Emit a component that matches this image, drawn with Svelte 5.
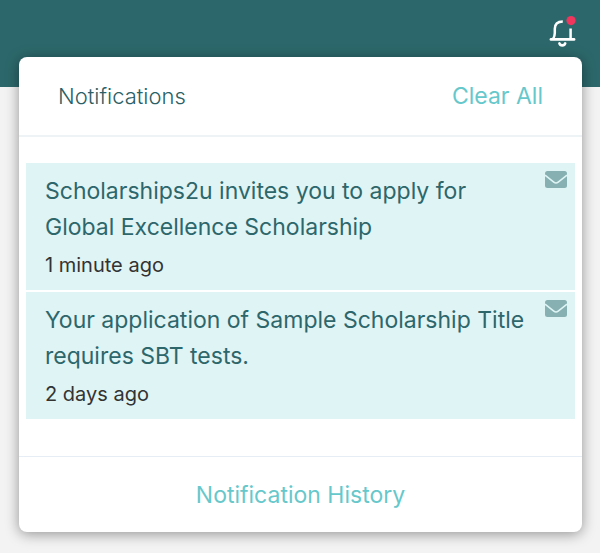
<script>
  let notifications = $state([
    {
      id: 1,
      text: 'Scholarships2u invites you to apply for Global Excellence Scholarship',
      time: '1 minute ago'
    },
    {
      id: 2,
      text: 'Your application of Sample Scholarship Title requires SBT tests.',
      time: '2 days ago'
    }
  ]);

  function clearAll() {
    notifications = [];
  }

  function markRead(id) {
    notifications = notifications.filter(n => n.id !== id);
  }
</script>

<header class="topbar">
  <button class="bell" aria-label="Notifications">
    <svg width="28" height="34" viewBox="0 0 28 34" fill="none">
      <path d="M14.8 7.4C9.6 7.4 6.8 10 6.8 14.8V19c0 2.4-.6 4.2-1.8 6.2M22.6 14.6V25" stroke="#fff" stroke-width="2.5" />
      <path d="M3 25.4h23" stroke="#fff" stroke-width="2.8" stroke-linecap="round" />
      <path d="M11.4 29.4c.8 2.6 5 2.6 5.8 0" stroke="#fff" stroke-width="2.6" stroke-linecap="round" />
      {#if notifications.length}
        <circle cx="23" cy="6.6" r="4.6" fill="#f0365c" />
      {/if}
    </svg>
  </button>
</header>

<section class="panel">
  <div class="panel-head">
    <h1>Notifications</h1>
    <button class="action" onclick={clearAll}>Clear All</button>
  </div>

  <ul class="list">
    {#each notifications as item (item.id)}
      <li class="item">
        <div class="body">
          <p class="text">{item.text}</p>
          <p class="time">{item.time}</p>
        </div>
        <button class="mail" aria-label="Mark as read" onclick={() => markRead(item.id)}>
          <svg width="24" height="18" viewBox="0 0 24 18">
            <rect x="1" width="22" height="17" rx="2.5" fill="#86b0b2" />
            <path d="M1 4.2l8.8 7c1.3 1 3.1 1 4.4 0L23 4.2" fill="none" stroke="#dff4f5" stroke-width="1.6" />
          </svg>
        </button>
      </li>
    {/each}
  </ul>

  <div class="panel-foot">
    <a class="action" href="#history">Notification History</a>
  </div>
</section>

<style>
:global(body) {
    margin: 0;
    background-color: #f3f3f3;
    font-family: Inter, "Liberation Sans", sans-serif;
}
button {
    padding: 0;
    border: none;
    background: none;
    font-family: inherit;
    cursor: pointer;
}
svg {
    display: block;
}
.topbar {
    display: flex;
    justify-content: flex-end;
    align-items: flex-start;
    box-sizing: border-box;
    height: 87px;
    padding: 14px 24px 0;
    background-color: #2c686b;
}
.panel {
    position: relative;
    margin: -30px 18px 20px 19px;
    background-color: #fff;
    border-radius: 8px;
    box-shadow: 0 2px 14px rgba(0, 0, 0, 0.4);
}
.panel-head {
    display: flex;
    justify-content: space-between;
    align-items: center;
    height: 78px;
    padding: 0 39px;
    border-bottom: 2px solid #eef3f5;
}
h1 {
    margin: 0;
    font-size: 22px;
    font-weight: 300;
    color: #2c5f66;
}
.action {
    font-size: 23px;
    color: #66c8cb;
    text-decoration: none;
}
.list {
    display: flex;
    flex-direction: column;
    gap: 2px;
    min-height: 256px;
    margin: 0;
    padding: 26px 7px 37px;
    list-style: none;
}
.item {
    display: flex;
    justify-content: space-between;
    align-items: flex-start;
    padding: 8px 7px 7px 19px;
    background-color: #dff4f5;
}
.body {
    padding: 2px 12px 0 0;
}
.text {
    margin: 0;
    font-size: 23px;
    line-height: 36px;
    color: #2d666b;
}
.time {
    margin: 0;
    padding-top: 2px;
    font-size: 20px;
    line-height: 36px;
    color: #333;
}
.panel-foot {
    display: flex;
    justify-content: center;
    align-items: center;
    height: 75px;
    border-top: 1px solid #e6edf5;
}
</style>
